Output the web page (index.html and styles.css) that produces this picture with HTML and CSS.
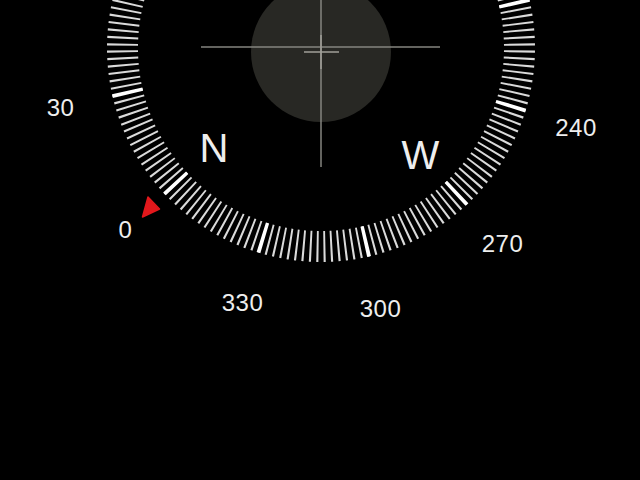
FILE: index.html
```html
<!doctype html>
<html lang="en">
  <head>
    <meta charset="UTF-8" />
    <meta name="viewport" content="width=device-width, initial-scale=1.0" />
    <title>Compass</title>
    <link rel="stylesheet" href="styles.css">
  </head>
  <body>
    <div class="screen">
      <svg class="compass" viewBox="0 0 640 480" width="640" height="480">
        <!-- level bubble -->
        <circle class="bubble" cx="321" cy="52" r="70"></circle>

        <!-- dial ticks: every 2 degrees, heavier every 30 -->
        <circle class="ticks-minor" cx="321" cy="48" r="198.5" pathLength="360"></circle>
        <circle class="ticks-major" cx="321" cy="48" r="198.5" pathLength="360"></circle>

        <!-- crosshair -->
        <line class="cross" x1="321" y1="0" x2="321" y2="167"></line>
        <line class="cross" x1="201" y1="47" x2="440" y2="47"></line>
        <line class="cross-small" x1="304" y1="52" x2="339" y2="52"></line>
        <line class="cross-small" x1="321" y1="35" x2="321" y2="69"></line>

        <!-- north marker -->
        <polygon class="north" points="148,197 159.5,209 142.5,217"></polygon>

        <!-- cardinal letters -->
        <text class="cardinal" x="214" y="148">N</text>
        <text class="cardinal" x="420.5" y="155">W</text>

        <!-- degree labels -->
        <text class="deg" x="125.5" y="229.5">0</text>
        <text class="deg" x="60.5" y="107.5">30</text>
        <text class="deg" x="242.5" y="302.5">330</text>
        <text class="deg" x="380.5" y="308">300</text>
        <text class="deg" x="502.5" y="243.5">270</text>
        <text class="deg" x="576" y="127">240</text>
      </svg>
    </div>
  </body>
</html>
```

FILE: styles.css
```css
:root {
  --color-bg: #000;
  --color-text: #eeeeee;
  --color-tick: #dadada;
  --color-major: #fff;
  --color-cross: #85857f;
  --color-bubble: #282824;
  --color-north: #e3181c;
}

body {
  margin: 0;
  padding: 0;
  background-color: var(--color-bg);
  overflow: hidden;
}

.screen {
  width: 640px;
  height: 480px;
  background-color: var(--color-bg);
}

.compass {
  display: block;
}

.bubble {
  fill: var(--color-bubble);
}

.ticks-minor {
  fill: none;
  stroke: var(--color-tick);
  stroke-width: 31;
  stroke-dasharray: 0.58 1.42;
  stroke-dashoffset: -0.71;
}

.ticks-major {
  fill: none;
  stroke: var(--color-major);
  stroke-width: 31;
  stroke-dasharray: 1.05 28.95;
  stroke-dashoffset: -16.475;
}

.cross {
  stroke: var(--color-cross);
  stroke-width: 1.5;
}

.cross-small {
  stroke: #a09f99;
  stroke-width: 1.5;
}

.north {
  fill: var(--color-north);
  stroke: var(--color-north);
  stroke-width: 1.5;
  stroke-linejoin: round;
}

.cardinal,
.deg {
  fill: var(--color-text);
  font-family: 'Liberation Sans', Arial, sans-serif;
  text-anchor: middle;
  dominant-baseline: central;
}

.cardinal {
  font-size: 40px;
}

.deg {
  font-size: 24px;
  letter-spacing: 0.5px;
}
```
